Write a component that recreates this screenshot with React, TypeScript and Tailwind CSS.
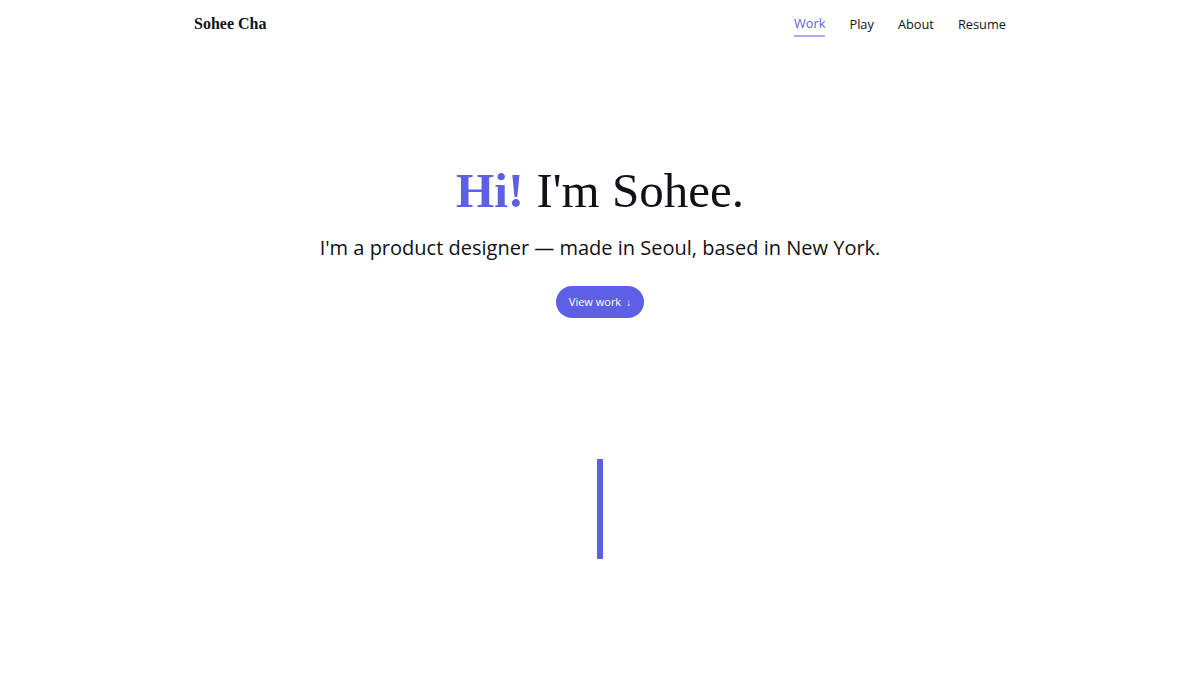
const navItems = ['Work', 'Play', 'About', 'Resume'];

export default function App() {
  return (
    <div className="min-h-screen bg-white text-[#111118]" style={{ fontFamily: '"Open Sans", sans-serif' }}>
      <header className="mx-auto flex h-[48px] w-[812px] items-center justify-between">
        <a className="text-[16px] font-bold" style={{ fontFamily: '"Liberation Serif", serif' }}>
          Sohee Cha
        </a>
        <nav className="flex items-center gap-[24px] text-[12.8px]">
          {navItems.map((item, idx) => (
            <a
              key={item}
              className={idx === 0 ? 'border-b-2 border-[#a9aaf0] pb-[1px] pt-[3px] text-[#5d5fe5]' : 'pb-[1px] pt-[3px]'}
            >
              {item}
            </a>
          ))}
        </nav>
      </header>

      <main className="flex flex-col items-center pt-[115px]">
        <h1 className="text-[49px] leading-[56px]" style={{ fontFamily: '"Liberation Serif", serif' }}>
          <span className="font-bold text-[#5d5fe5]">Hi!</span> I'm Sohee.
        </h1>
        <p className="mt-[14px] text-[20px] leading-[30px]">
          I'm a product designer — made in Seoul, based in New York.
        </p>
        <button className="mt-[23px] flex h-[32px] items-center gap-[5px] rounded-full bg-[#5d5fe5] px-[13px] text-[11px] text-white">
          View work
          <span className="text-[10px]">↓</span>
        </button>

        <div className="mt-[141px] h-[100px] w-[6px] bg-[#5d5fe5]" />
      </main>
    </div>
  );
}
